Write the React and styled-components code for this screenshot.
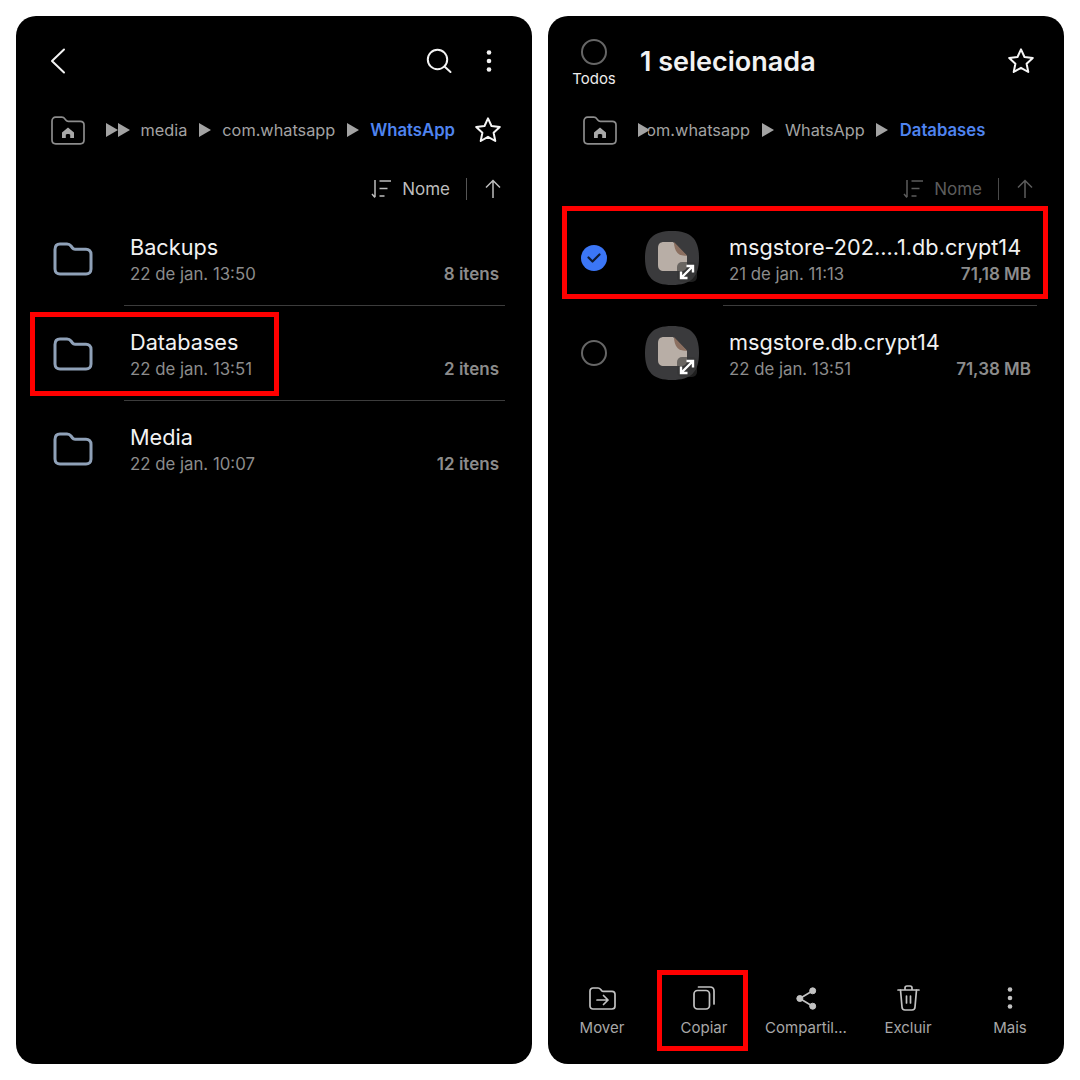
import styled, { createGlobalStyle } from "styled-components";

const GlobalStyle = createGlobalStyle`
  html, body {
    margin: 0;
    padding: 0;
    background: #fff;
    font-family: "Inter", "Liberation Sans", sans-serif;
  }
`;

const Back = () => (
  <svg width="16" height="26" viewBox="0 0 16 26" fill="none" stroke="#f2f2f2" strokeWidth="2" strokeLinecap="round" strokeLinejoin="round">
    <path d="M14 1.5 2 13l12 11.5" />
  </svg>
);

const Search = () => (
  <svg width="26" height="26" viewBox="0 0 26 26" fill="none" stroke="#f2f2f2" strokeWidth="2" strokeLinecap="round">
    <circle cx="11.5" cy="11.5" r="9.7" />
    <path d="m18.5 18.5 6 5.5" />
  </svg>
);

const Dots = ({ color = "#f2f2f2" }) => (
  <svg width="6" height="24" viewBox="0 0 6 24" fill={color}>
    <circle cx="3" cy="3.5" r="2.3" />
    <circle cx="3" cy="12" r="2.3" />
    <circle cx="3" cy="20.5" r="2.3" />
  </svg>
);

const Star = () => (
  <svg width="28" height="28" viewBox="0 0 28 28" fill="none" stroke="#f5f5f5" strokeWidth="2" strokeLinejoin="round">
    <path d="M14 2.3 17.5 10l8.3 1-6.2 5.7 1.7 8.3-7.3-4.2L6.700 25l1.700-8.300L2.200 11l8.300-1z" />
  </svg>
);

const HomeFolder = () => (
  <svg width="34" height="29" viewBox="0 0 34 29" fill="none">
    <path d="M1 5c0-2.300 1.500-3.800 3.700-3.800h6c1.600 0 2.500.6 3.300 1.700l1 1.300c.6.800 1.200 1.100 2.300 1.100h12c2.300 0 3.700 1.500 3.700 3.700V24c0 2.300-1.400 3.800-3.700 3.800H4.700C2.500 27.800 1 26.300 1 24z" stroke="#8c8c8c" strokeWidth="1.700" />
    <path d="M17 11.500 11 16.500V22h3.800v-3.200c0-1.200 4.400-1.200 4.400 0V22H23v-5.500z" fill="#a8a8a8" />
  </svg>
);

const Triangle = () => (
  <svg width="12" height="14" viewBox="0 0 12 14" fill="#a3a3a3">
    <path d="M0 0 12 7 0 14z" />
  </svg>
);

const SortIcon = ({ color }) => (
  <svg width="21" height="20" viewBox="0 0 21 20" fill="none" stroke={color} strokeWidth="1.500">
    <path d="M4 1v17M1 15l3 3.500" />
    <path d="M8.500 2H20M8.500 9.500h8M8.500 17h5" />
  </svg>
);

const UpArrow = ({ color }) => (
  <svg width="16" height="20" viewBox="0 0 16 20" fill="none" stroke={color} strokeWidth="1.500">
    <path d="M8 19V1.500M1 8.500l7-7 7 7" />
  </svg>
);

const Folder = () => (
  <svg width="40" height="34" viewBox="0 0 40 34" fill="none" stroke="#8fa1b8" strokeWidth="3">
    <path d="M2 7.500C2 4 4 2 7 2h7c2 0 3 .7 4 2l1.500 2c.6.8 1.300 1.200 2.500 1.200h11c3 0 5 2 5 5V27c0 3-2 5-5 5H7c-3 0-5-2-5-5z" />
  </svg>
);

const FileThumb = () => (
  <svg width="54" height="54" viewBox="0 0 54 54">
    <path d="M27 0C46 0 54 8 54 27S46 54 27 54 0 46 0 27 8 0 27 0z" fill="#3a3a3c" />
    <path d="M19 11h9l14 14v9c0 4-2 6-6 6H19c-4 0-6-2-6-6V17c0-4 2-6 6-6z" fill="#b8aea6" />
    <path d="M29 11 42 24.500c-3 .5-7 0-9.500-2.500S29 15 29 11z" fill="#8b6f60" />
    <rect x="32" y="31" width="20" height="20" rx="5" fill="#333" fillOpacity="0.6" />
    <path d="M36 47 48 35M41.500 35H48v6.500M36 40.500V47h6.500" fill="none" stroke="#fff" strokeWidth="2.400" />
  </svg>
);

const Check = () => (
  <svg width="14" height="10" viewBox="0 0 14 10" fill="none" stroke="#0d1a33" strokeWidth="2.200" strokeLinecap="round" strokeLinejoin="round">
    <path d="m1.500 4.500 4 4 7-7" />
  </svg>
);

const MoveIcon = () => (
  <svg width="27" height="23" viewBox="0 0 27 23" fill="none" stroke="#c2c2c2" strokeWidth="1.700" strokeLinecap="round" strokeLinejoin="round">
    <path d="M1 4c0-1.800 1.200-3 3-3h5c1.300 0 2 .5 2.700 1.400l.8 1c.5.7 1 .9 1.900.9H23c1.800 0 3 1.200 3 3V19c0 1.800-1.200 3-3 3H4c-1.800 0-3-1.200-3-3z" />
    <path d="M8 13h11M14.500 8.500 19 13l-4.500 4.500" />
  </svg>
);

const CopyIcon = () => (
  <svg width="22" height="24" viewBox="0 0 22 24" fill="none" stroke="#c2c2c2" strokeWidth="1.700" strokeLinecap="round">
    <rect x="1" y="4.500" width="15.500" height="18.500" rx="3.500" />
    <path d="M5.500 1H17c2.500 0 4 1.500 4 4v13" />
  </svg>
);

const ShareIcon = () => (
  <svg width="21" height="23" viewBox="0 0 21 23" fill="#c2c2c2" stroke="#c2c2c2">
    <circle cx="16.700" cy="3.800" r="3" />
    <circle cx="16.700" cy="19.200" r="3" />
    <circle cx="3.800" cy="11.500" r="3" />
    <path d="M16.700 3.800 3.800 11.500l12.900 7.700" fill="none" strokeWidth="1.700" />
  </svg>
);

const TrashIcon = () => (
  <svg width="23" height="26" viewBox="0 0 23 26" fill="none" stroke="#c2c2c2" strokeWidth="1.700" strokeLinecap="round">
    <path d="M1 5h21M8 5V3c0-1 .6-2 2-2h3c1.400 0 2 1 2 2v2" />
    <path d="M3.500 5 5 22c.1 1.800 1.200 3 3 3h7c1.800 0 2.900-1.200 3-3l1.500-17" />
    <path d="M9.500 11v7M13.500 11v7" />
  </svg>
);

const folders = [
  { name: "Backups", date: "22 de jan. 13:50", count: "8 itens" },
  { name: "Databases", date: "22 de jan. 13:51", count: "2 itens", marked: true },
  { name: "Media", date: "22 de jan. 10:07", count: "12 itens" },
];

const files = [
  { name: "msgstore-202....1.db.crypt14", date: "21 de jan. 11:13", size: "71,18 MB", selected: true },
  { name: "msgstore.db.crypt14", date: "22 de jan. 13:51", size: "71,38 MB" },
];

const actions = [
  { label: "Mover", icon: <MoveIcon /> },
  { label: "Copiar", icon: <CopyIcon />, marked: true },
  { label: "Compartil...", icon: <ShareIcon /> },
  { label: "Excluir", icon: <TrashIcon /> },
  { label: "Mais", icon: <Dots color="#c2c2c2" /> },
];

function SortBar({ dim }) {
  const color = dim ? "#5c5c5c" : "#bdbdbd";
  return (
    <Sort>
      <SortIcon color={color} />
      <SortLabel $color={color}>Nome</SortLabel>
      <SortDivider $dim={dim} />
      <UpArrow color={color} />
    </Sort>
  );
}

export default function App() {
  return (
    <>
      <GlobalStyle />
      <Page>
        <Phone>
          <TopBar>
            <Back />
            <TopActions>
              <Search />
              <Dots />
            </TopActions>
          </TopBar>
          <Breadcrumb>
            <HomeFolder />
            <Crumbs>
              <Arrows>
                <Triangle />
                <Triangle />
              </Arrows>
              <Crumb>media</Crumb>
              <Triangle />
              <Crumb>com.whatsapp</Crumb>
              <Triangle />
              <Crumb $current>WhatsApp</Crumb>
            </Crumbs>
            <StarSlot>
              <Star />
            </StarSlot>
          </Breadcrumb>
          <SortBar />
          <List>
            {folders.map((f, i) => (
              <Row key={f.name} $divider={i > 0} $inset={108}>
                {f.marked && <Highlight $left={14} $top={7} $width={249} $height={84} />}
                <FolderSlot>
                  <Folder />
                </FolderSlot>
                <RowText>
                  <Name>{f.name}</Name>
                  <Meta>
                    <span>{f.date}</span>
                    <Amount>{f.count}</Amount>
                  </Meta>
                </RowText>
              </Row>
            ))}
          </List>
        </Phone>

        <Phone>
          <SelectBar>
            <SelectAll>
              <Radio />
              <AllLabel>Todos</AllLabel>
            </SelectAll>
            <Title>1 selecionada</Title>
            <Star />
          </SelectBar>
          <Breadcrumb>
            <HomeFolder />
            <Crumbs>
              <Triangle />
              <ClippedCrumb>
                <Crumb>com.whatsapp</Crumb>
              </ClippedCrumb>
              <Triangle />
              <Crumb>WhatsApp</Crumb>
              <Triangle />
              <Crumb $current>Databases</Crumb>
            </Crumbs>
          </Breadcrumb>
          <SortBar dim />
          <List>
            {files.map((f, i) => (
              <Row key={f.name} $divider={i > 0} $inset={175}>
                {f.selected && <Highlight $left={14} $top={-4} $width={486} $height={93} />}
                <CheckSlot>
                  {f.selected ? (
                    <Checked>
                      <Check />
                    </Checked>
                  ) : (
                    <Radio />
                  )}
                </CheckSlot>
                <ThumbSlot>
                  <FileThumb />
                </ThumbSlot>
                <RowText>
                  <Name>{f.name}</Name>
                  <Meta>
                    <span>{f.date}</span>
                    <Amount>{f.size}</Amount>
                  </Meta>
                </RowText>
              </Row>
            ))}
          </List>
          <BottomBar>
            {actions.map((a) => (
              <Action key={a.label}>
                {a.marked && <Highlight $left={4} $top={-15} $width={91} $height={81} />}
                <ActionIcon>{a.icon}</ActionIcon>
                <ActionLabel>{a.label}</ActionLabel>
              </Action>
            ))}
          </BottomBar>
        </Phone>
      </Page>
    </>
  );
}

const Page = styled.div`
  display: flex;
  gap: 16px;
  width: 1080px;
  height: 1080px;
  padding: 16px;
  box-sizing: border-box;
  background: #fff;
`;

const Phone = styled.section`
  display: flex;
  flex-direction: column;
  width: 516px;
  height: 1048px;
  border-radius: 20px;
  background: #000;
  overflow: hidden;
`;

const TopBar = styled.header`
  display: flex;
  align-items: center;
  justify-content: space-between;
  height: 90px;
  padding: 0 40px 0 34px;
  box-sizing: border-box;
`;

const TopActions = styled.div`
  display: flex;
  align-items: center;
  gap: 34px;
`;

const SelectBar = styled.header`
  display: flex;
  align-items: center;
  height: 90px;
  padding: 0 29px 0 24px;
  box-sizing: border-box;
`;

const SelectAll = styled.div`
  display: flex;
  flex-direction: column;
  align-items: center;
  gap: 5px;
  width: 44px;
  margin-top: 4px;
`;

const AllLabel = styled.span`
  font-size: 15px;
  line-height: 18px;
  color: #ececec;
`;

const Title = styled.h1`
  flex: 1;
  margin: 0 0 0 24px;
  font-size: 27px;
  font-weight: 600;
  color: #f2f2f2;
`;

const Breadcrumb = styled.nav`
  display: flex;
  align-items: center;
  height: 48px;
  padding-left: 35px;
`;

const Crumbs = styled.div`
  display: flex;
  align-items: center;
  gap: 11.5px;
  margin-left: 21px;
`;

const Arrows = styled.span`
  display: flex;
  margin-right: -1px;
`;

const Crumb = styled.span`
  font-size: ${(p) => (p.$current ? 16.7 : 16.3)}px;
  white-space: nowrap;
  font-weight: ${(p) => (p.$current ? 600 : 400)};
  color: ${(p) => (p.$current ? "#4f84f0" : "#a3a3a3")};
`;

const ClippedCrumb = styled.span`
  display: flex;
  justify-content: flex-end;
  width: 102px;
  margin-left: -13.5px;
  overflow: hidden;
`;

const StarSlot = styled.span`
  display: flex;
  margin-left: 19px;
`;

const Sort = styled.div`
  display: flex;
  align-items: center;
  justify-content: flex-end;
  height: 42px;
  margin-top: 14px;
  padding-right: 31px;
`;

const SortLabel = styled.span`
  margin: 0 16px 0 10px;
  font-size: 17px;
  color: ${(p) => p.$color};
`;

const SortDivider = styled.span`
  width: 1px;
  height: 22px;
  margin-right: 18px;
  background: ${(p) => (p.$dim ? "#4a4a4a" : "#555")};
`;

const List = styled.div`
  display: flex;
  flex-direction: column;
`;

const Row = styled.div`
  position: relative;
  display: flex;
  align-items: center;
  height: 95px;
  padding-right: 33px;
  box-sizing: border-box;

  &::before {
    content: "";
    display: ${(p) => (p.$divider ? "block" : "none")};
    position: absolute;
    top: 0;
    left: ${(p) => p.$inset}px;
    right: 27px;
    height: 1px;
    background: #3c3c3c;
  }
`;

const Highlight = styled.div`
  position: absolute;
  left: ${(p) => p.$left}px;
  top: ${(p) => p.$top}px;
  width: ${(p) => p.$width}px;
  height: ${(p) => p.$height}px;
  box-sizing: border-box;
  border: 5px solid #f00;
  pointer-events: none;
`;

const FolderSlot = styled.div`
  display: flex;
  flex: none;
  width: 77px;
  margin-left: 37px;
  padding-top: 2px;
`;

const CheckSlot = styled.div`
  display: flex;
  justify-content: center;
  flex: none;
  width: 26px;
  margin-left: 33px;
`;

const ThumbSlot = styled.div`
  display: flex;
  flex: none;
  width: 84px;
  margin-left: 38px;
`;

const Radio = styled.span`
  display: block;
  width: 26px;
  height: 26px;
  box-sizing: border-box;
  border: 2px solid #666;
  border-radius: 50%;
`;

const Checked = styled.span`
  display: flex;
  align-items: center;
  justify-content: center;
  width: 26px;
  height: 26px;
  border-radius: 50%;
  background: #3b76f6;
`;

const RowText = styled.div`
  display: flex;
  flex: 1;
  flex-direction: column;
  gap: 3px;
  padding-top: 4px;
`;

const Name = styled.span`
  font-size: 21.7px;
  line-height: 26px;
  color: #f2f2f2;
  white-space: nowrap;
`;

const Meta = styled.div`
  display: flex;
  justify-content: space-between;
  font-size: 16.8px;
  line-height: 22px;
  color: #8c8c8c;
`;

const Amount = styled.span`
  font-weight: 600;
  font-size: 17px;
`;

const BottomBar = styled.footer`
  display: grid;
  grid-template-columns: repeat(5, 102px);
  margin-top: auto;
  padding: 0 3px 26px;
`;

const Action = styled.div`
  position: relative;
  display: flex;
  flex-direction: column;
  align-items: center;
  gap: 7px;
`;

const ActionIcon = styled.span`
  display: flex;
  align-items: center;
  justify-content: center;
  height: 26px;
`;

const ActionLabel = styled.span`
  font-size: 15px;
  line-height: 20px;
  color: #a8a8a8;
  white-space: nowrap;
`;
